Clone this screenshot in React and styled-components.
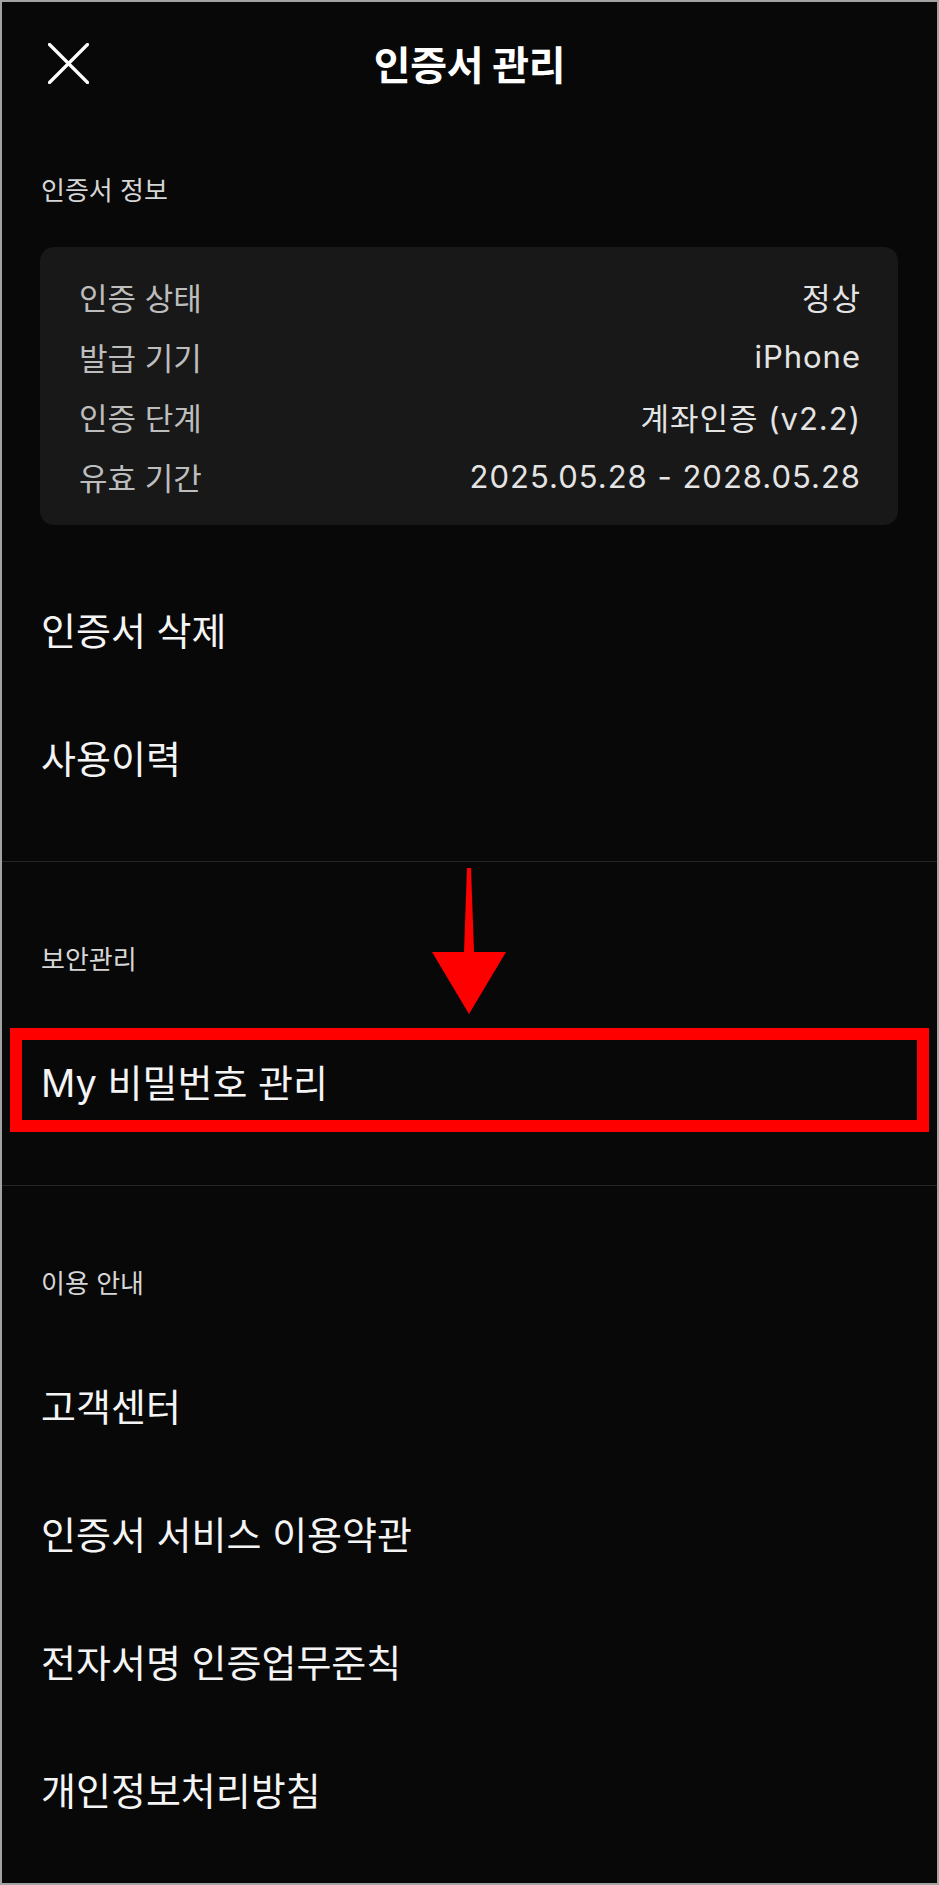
import React from "react";
import styled, { createGlobalStyle } from "styled-components";

const GlobalStyle = createGlobalStyle`
  * {
    box-sizing: border-box;
  }

  body {
    margin: 0;
    background: #080808;
  }
`;

const Screen = styled.div`
  width: 939px;
  min-height: 1885px;
  border: 2px solid #a3a3a3;
  background: #080808;
  color: #f4f4f4;
  font-family: "Inter", "Noto Sans CJK KR", sans-serif;
`;

const Header = styled.header`
  display: grid;
  grid-template-columns: 1fr auto 1fr;
  align-items: center;
  height: 122px;
  padding: 0 46px;
`;

const CloseButton = styled.button`
  display: flex;
  width: 41px;
  height: 41px;
  padding: 0;
  border: none;
  background: none;
  cursor: pointer;
`;

const Title = styled.h1`
  margin: 0;
  font-size: 40px;
  font-weight: 700;
  letter-spacing: -0.3px;
  color: #ffffff;
`;

const Section = styled.section`
  position: relative;
  padding-top: ${({ $top }) => $top}px;
  padding-bottom: ${({ $divider }) => ($divider ? 41 : 0)}px;
  border-bottom: ${({ $divider }) => ($divider ? "1px solid #242424" : "none")};
`;

const SectionLabel = styled.h2`
  margin: 0 0 38px;
  padding-left: 39px;
  font-size: 26px;
  font-weight: 400;
  line-height: 36px;
  color: #d6d6d6;
`;

const InfoCard = styled.div`
  margin: 0 39px 39px 38px;
  padding: 19px 37px 19px 39px;
  border-radius: 14px;
  background: #181818;
`;

const InfoRow = styled.div`
  display: flex;
  justify-content: space-between;
  align-items: center;
  height: 60px;
  font-size: 31px;
`;

const InfoLabel = styled.span`
  color: #bdbdbd;
`;

const InfoValue = styled.span`
  color: #e4e4e4;
  letter-spacing: 1px;
`;

const MenuItem = styled.div`
  position: relative;
  display: flex;
  align-items: center;
  height: 128px;
  padding-left: 39px;
  font-size: 38px;
  color: #f4f4f4;
  cursor: pointer;
`;

const Highlight = styled.span`
  position: absolute;
  top: 12px;
  bottom: 12px;
  left: 8px;
  right: 8px;
  border: 12px solid #ff0000;
  pointer-events: none;
`;

const Arrow = styled.svg`
  position: absolute;
  top: 6px;
  left: 427px;
  width: 80px;
  height: 146px;
`;

const info = [
  ["인증 상태", "정상"],
  ["발급 기기", "iPhone"],
  ["인증 단계", "계좌인증 (v2.2)"],
  ["유효 기간", "2025.05.28 - 2028.05.28"],
];

const guides = [
  "고객센터",
  "인증서 서비스 이용약관",
  "전자서명 인증업무준칙",
  "개인정보처리방침",
];

export default function App() {
  return (
    <>
      <GlobalStyle />
      <Screen>
        <Header>
          <CloseButton aria-label="닫기">
            <svg width="41" height="41" viewBox="0 0 41 41">
              <path
                d="M1.5 1.5 L39.5 39.5 M39.5 1.5 L1.5 39.5"
                stroke="#ffffff"
                strokeWidth="3.2"
                strokeLinecap="round"
              />
            </svg>
          </CloseButton>
          <Title>인증서 관리</Title>
          <span />
        </Header>

        <Section $top={49} $divider>
          <SectionLabel>인증서 정보</SectionLabel>
          <InfoCard>
            {info.map(([label, value]) => (
              <InfoRow key={label}>
                <InfoLabel>{label}</InfoLabel>
                <InfoValue>{value}</InfoValue>
              </InfoRow>
            ))}
          </InfoCard>
          <MenuItem>인증서 삭제</MenuItem>
          <MenuItem>사용이력</MenuItem>
        </Section>

        <Section $top={80} $divider>
          <Arrow viewBox="0 0 80 146">
            <polygon points="38,0 42,0 45,84 35,84" fill="#ff0000" />
            <polygon points="3,84 77,84 40,146" fill="#ff0000" />
          </Arrow>
          <SectionLabel>보안관리</SectionLabel>
          <MenuItem>
            My 비밀번호 관리
            <Highlight />
          </MenuItem>
        </Section>

        <Section $top={80}>
          <SectionLabel>이용 안내</SectionLabel>
          {guides.map((item) => (
            <MenuItem key={item}>{item}</MenuItem>
          ))}
        </Section>
      </Screen>
    </>
  );
}
